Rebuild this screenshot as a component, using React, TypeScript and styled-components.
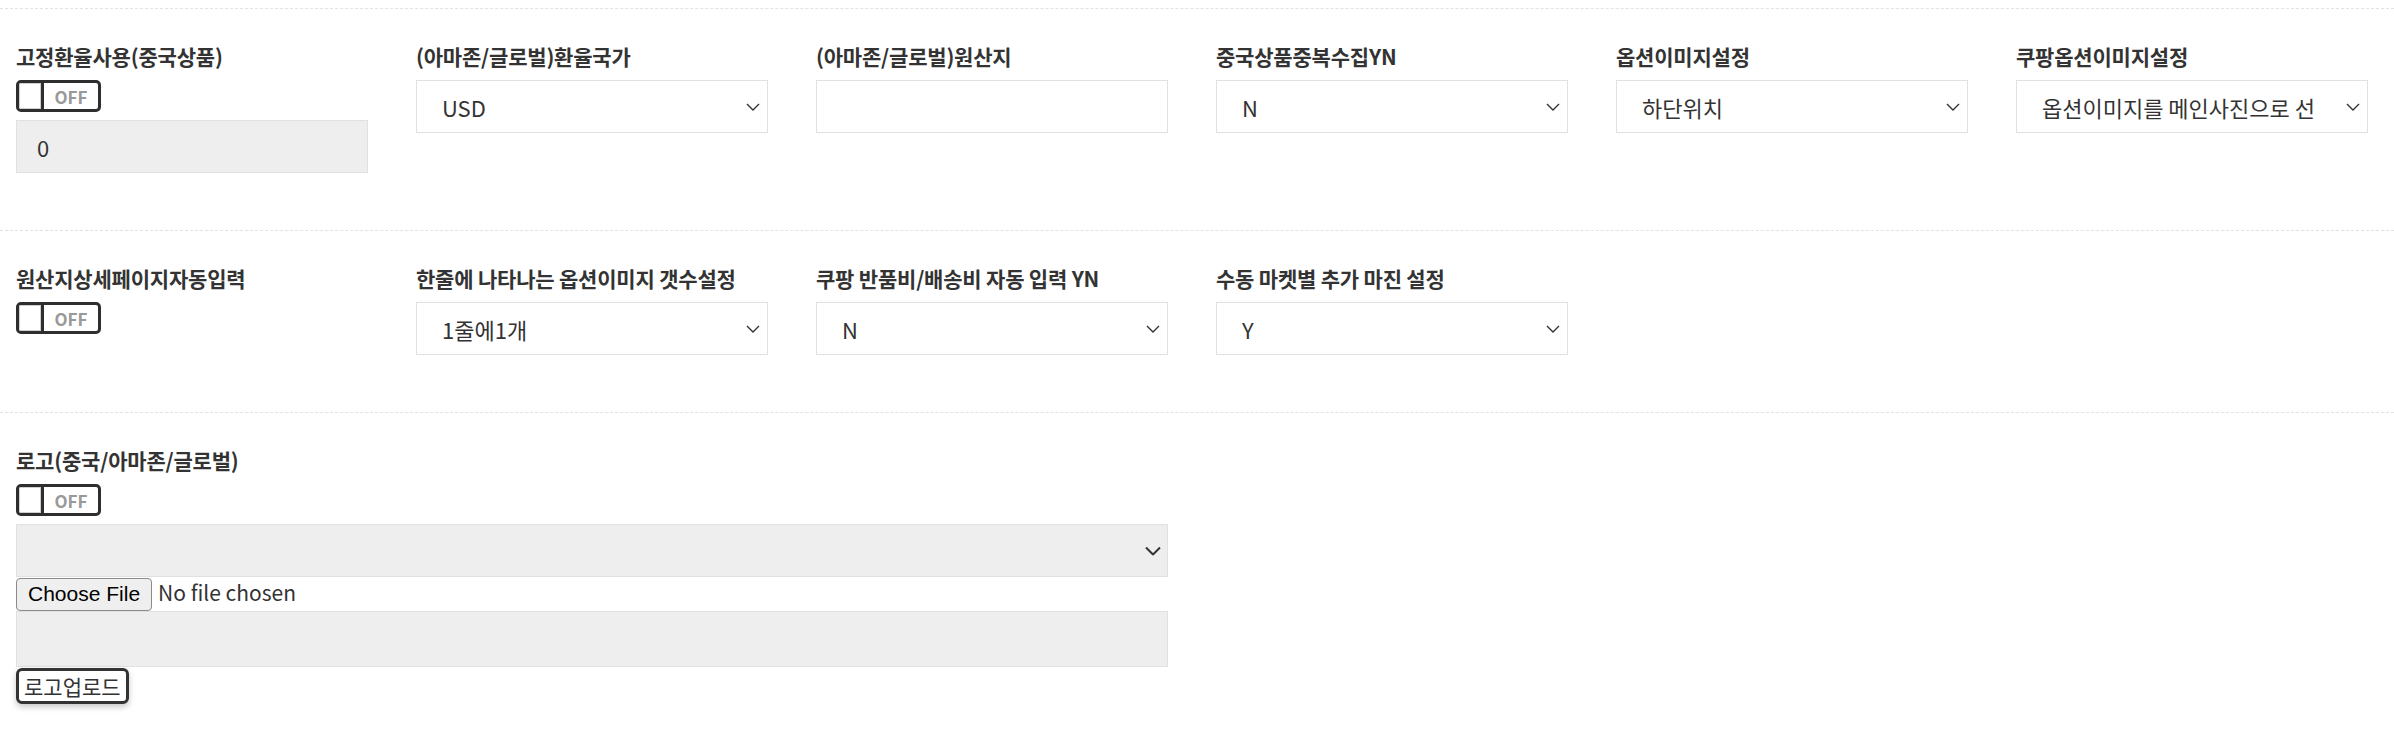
import React from "react";
import styled, { createGlobalStyle } from "styled-components";

const GlobalStyle = createGlobalStyle`
  html, body { margin: 0; padding: 0; background: #fff; }
  body {
    font-family: "Noto Sans CJK KR", "Noto Sans", sans-serif;
    color: #333;
  }
  * { box-sizing: border-box; }
`;

const Page = styled.div`
  padding-top: 8px;
`;

const Section = styled.section`
  border-top: 1px dashed #e2e2e2;
  padding: 33px 16px 57px;
`;

const Grid = styled.div`
  display: grid;
  grid-template-columns: repeat(6, 352px);
  column-gap: 48px;
  align-items: start;
`;

const Field = styled.div<{ $span?: number }>`
  display: flex;
  flex-direction: column;
  grid-column: span ${(p) => p.$span ?? 1};
  min-width: 0;
`;

const Label = styled.div`
  font-size: 21px;
  font-weight: 700;
  line-height: 28px;
  color: #333;
  margin-bottom: 10px;
  white-space: nowrap;
  letter-spacing: -0.2px;
`;

const Controls = styled.div`
  display: flex;
  flex-direction: column;
  gap: 8px;
  align-items: flex-start;
`;

const Stack = styled.div`
  display: flex;
  flex-direction: column;
  align-items: flex-start;
  width: 100%;
`;

const Toggle = styled.label`
  display: flex;
  align-items: stretch;
  width: 85px;
  height: 32px;
  border: 3px solid #2e2e2e;
  border-radius: 5px;
  background: #fff;
  cursor: pointer;
  overflow: hidden;
`;

const Knob = styled.span`
  width: 25px;
  border-right: 3px solid #2e2e2e;
  background: #fff;
  border-radius: 2px 0 0 2px;
  box-shadow: inset 0 0 0 1px #cfcfcf;
`;

const ToggleText = styled.span`
  flex: 1;
  display: flex;
  align-items: center;
  justify-content: center;
  font-size: 17px;
  font-weight: 700;
  color: #999;
`;

const TextInput = styled.input<{ $gray?: boolean }>`
  width: 100%;
  height: 53px;
  border: 1px solid #e1e1e1;
  background: ${(p) => (p.$gray ? "#eeeeee" : "#fff")};
  padding: 0 20px;
  font-family: inherit;
  font-size: 22px;
  color: #333;
  outline: none;
`;

const SelectWrap = styled.div`
  position: relative;
  width: 100%;
`;

const Select = styled.select<{ $gray?: boolean }>`
  appearance: none;
  -webkit-appearance: none;
  width: 100%;
  height: 53px;
  border: 1px solid #e1e1e1;
  border-radius: 0;
  background: ${(p) => (p.$gray ? "#eeeeee" : "#fff")};
  padding: 0 52px 0 25px;
  font-family: inherit;
  font-size: 22px;
  color: #333;
  outline: none;
  opacity: 1;
`;

const Chevron = styled.svg<{ $bold?: boolean }>`
  position: absolute;
  right: ${(p) => (p.$bold ? "7px" : "8px")};
  top: 50%;
  transform: translateY(-50%);
  pointer-events: none;
`;

const FileInput = styled.input`
  height: 34px;
  width: 100%;
  font-family: "Noto Sans CJK KR", sans-serif;
  font-size: 21px;
  color: #333;
  &::file-selector-button {
    font-family: "Liberation Sans", Arial, sans-serif;
    font-size: 21px;
    color: #000;
    height: 33px;
    padding: 0 11px;
    margin-right: 6px;
    border: 1px solid #8a8a8a;
    border-radius: 4px;
    background: #efefef;
  }
`;

const Preview = styled.div`
  width: 100%;
  height: 56px;
  background: #eeeeee;
  border: 1px solid #e1e1e1;
`;

const UploadButton = styled.button`
  margin-top: 1px;
  height: 36px;
  padding: 0 5px;
  border: 3px solid #333;
  border-radius: 6px;
  background: #fff;
  box-shadow: 0 3px 6px rgba(0, 0, 0, 0.22);
  font-family: "Noto Sans CJK KR", sans-serif;
  font-size: 21px;
  line-height: 1;
  color: #333;
  cursor: pointer;
`;

const ChevronIcon = ({ bold }: { bold?: boolean }) => (
  <Chevron $bold={bold} width={bold ? 16 : 14} height={bold ? 9 : 8} viewBox={bold ? "0 0 16 9" : "0 0 14 8"}>
    <polyline
      points={bold ? "1,1 8,8 15,1" : "1,1 7,7 13,1"}
      fill="none"
      stroke="#333"
      strokeWidth={bold ? 2 : 1.4}
    />
  </Chevron>
);

const OffToggle = () => (
  <Toggle>
    <Knob />
    <ToggleText>OFF</ToggleText>
  </Toggle>
);

const SelectBox = ({ value, options, gray }: { value: string; options: string[]; gray?: boolean }) => (
  <SelectWrap>
    <Select $gray={gray} defaultValue={value} disabled={gray}>
      {options.map((o) => (
        <option key={o} value={o}>
          {o}
        </option>
      ))}
    </Select>
    <ChevronIcon bold={gray} />
  </SelectWrap>
);

export default function App() {
  return (
    <Page>
      <GlobalStyle />
      <Section>
        <Grid>
          <Field>
            <Label>고정환율사용(중국상품)</Label>
            <Controls>
              <OffToggle />
              <TextInput $gray readOnly value="0" />
            </Controls>
          </Field>
          <Field>
            <Label>(아마존/글로벌)환율국가</Label>
            <SelectBox value="USD" options={["USD", "JPY", "EUR", "CNY"]} />
          </Field>
          <Field>
            <Label>(아마존/글로벌)원산지</Label>
            <TextInput />
          </Field>
          <Field>
            <Label>중국상품중복수집YN</Label>
            <SelectBox value="N" options={["N", "Y"]} />
          </Field>
          <Field>
            <Label>옵션이미지설정</Label>
            <SelectBox value="하단위치" options={["하단위치", "상단위치"]} />
          </Field>
          <Field>
            <Label>쿠팡옵션이미지설정</Label>
            <SelectBox value="옵션이미지를 메인사진으로 선택" options={["옵션이미지를 메인사진으로 선택"]} />
          </Field>
        </Grid>
      </Section>
      <Section>
        <Grid>
          <Field>
            <Label>원산지상세페이지자동입력</Label>
            <OffToggle />
          </Field>
          <Field>
            <Label>한줄에 나타나는 옵션이미지 갯수설정</Label>
            <SelectBox value="1줄에1개" options={["1줄에1개", "1줄에2개", "1줄에3개"]} />
          </Field>
          <Field>
            <Label>쿠팡 반품비/배송비 자동 입력 YN</Label>
            <SelectBox value="N" options={["N", "Y"]} />
          </Field>
          <Field>
            <Label>수동 마켓별 추가 마진 설정</Label>
            <SelectBox value="Y" options={["Y", "N"]} />
          </Field>
        </Grid>
      </Section>
      <Section>
        <Grid>
          <Field $span={3}>
            <Label>로고(중국/아마존/글로벌)</Label>
            <Controls>
              <OffToggle />
              <Stack>
                <SelectBox value="" options={[""]} gray />
                <FileInput type="file" />
                <Preview />
                <UploadButton>로고업로드</UploadButton>
              </Stack>
            </Controls>
          </Field>
        </Grid>
      </Section>
    </Page>
  );
}
